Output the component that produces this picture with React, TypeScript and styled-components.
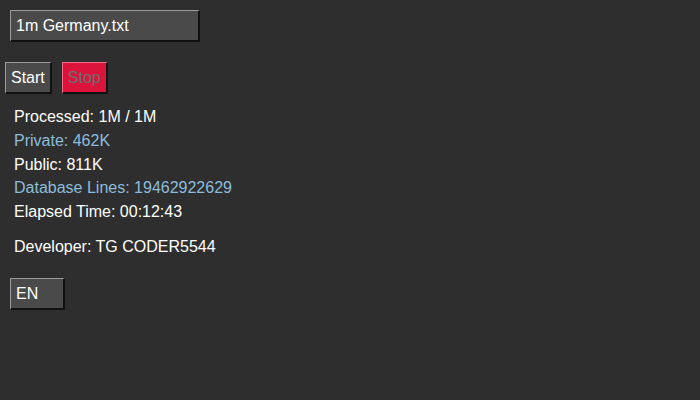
import React from "react";
import styled, { createGlobalStyle } from "styled-components";

const Global = createGlobalStyle`
  html, body { margin: 0; padding: 0; background: #2e2e2e; }
  body { font-family: "Liberation Sans", Arial, sans-serif; color: #ffffff; }
`;

const Page = styled.div`
  width: 700px;
  height: 400px;
  box-sizing: border-box;
  padding: 10px;
  display: flex;
  flex-direction: column;
  align-items: flex-start;
  background: #2e2e2e;
`;

const FileInput = styled.input`
  box-sizing: border-box;
  width: 190px;
  height: 32px;
  padding: 0 5px;
  background: #4a4a4a;
  color: #ffffff;
  font: 16px "Liberation Sans", Arial, sans-serif;
  border-style: solid;
  border-width: 1px 2px 2px 1px;
  border-color: #9a9a9a #111111 #111111 #9a9a9a;
  outline: none;
`;

const ButtonRow = styled.div`
  display: flex;
  gap: 10px;
  margin: 20px 0 0 -5px;
`;

const Btn = styled.button<{ $variant?: "danger" }>`
  box-sizing: border-box;
  height: 32px;
  min-width: 46px;
  padding: 0 5px;
  font: 16px "Liberation Sans", Arial, sans-serif;
  border-style: solid;
  border-width: 1px 2px 2px 1px;
  background: ${(p) => (p.$variant === "danger" ? "#dc143c" : "#4a4a4a")};
  color: ${(p) => (p.$variant === "danger" ? "#6e6e6e" : "#ffffff")};
  border-color: ${(p) =>
    p.$variant === "danger"
      ? "#f06a84 #111111 #111111 #f06a84"
      : "#9a9a9a #111111 #111111 #9a9a9a"};
  cursor: pointer;
`;

const LangBtn = styled(Btn)`
  width: 55px;
  text-align: left;
  margin-top: 22px;
`;

const Stats = styled.div`
  display: flex;
  flex-direction: column;
  gap: 5.4px;
  margin: 14px 0 0 4px;
`;

const Line = styled.div<{ $tone?: "blue" }>`
  font-size: 16px;
  line-height: 18.4px;
  color: ${(p) => (p.$tone === "blue" ? "#8cbcdc" : "#ffffff")};
`;

const Dev = styled(Line)`
  margin: 16px 0 0 4px;
`;

export default function App() {
  return (
    <>
      <Global />
      <Page>
        <FileInput readOnly value="1m Germany.txt" />
        <ButtonRow>
          <Btn>Start</Btn>
          <Btn $variant="danger" disabled>Stop</Btn>
        </ButtonRow>
        <Stats>
          <Line>Processed: 1M / 1M</Line>
          <Line $tone="blue">Private: 462K</Line>
          <Line>Public: 811K</Line>
          <Line $tone="blue">Database Lines: 19462922629</Line>
          <Line>Elapsed Time: 00:12:43</Line>
        </Stats>
        <Dev>Developer: TG CODER5544</Dev>
        <LangBtn>EN</LangBtn>
      </Page>
    </>
  );
}
